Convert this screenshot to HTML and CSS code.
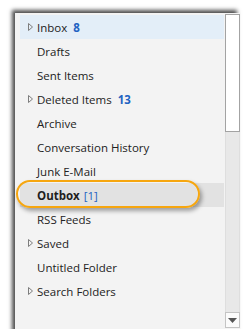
FILE: index.html
```html
<!DOCTYPE html>
<html>
<head>
<meta charset="utf-8">
<link rel="stylesheet" href="styles.css">
</head>
<body>
<div class="panel">
  <ul class="folders">
    <li class="row selected"><svg class="tw" width="7" height="10" viewBox="0 0 7 10"><path d="M1.5 1.5L5.5 5L1.5 8.5Z" fill="none" stroke="#7d7d7d" stroke-width="1"/></svg><span class="name">Inbox</span><span class="count">8</span></li>
    <li class="row"><span class="name">Drafts</span></li>
    <li class="row"><span class="name">Sent Items</span></li>
    <li class="row"><svg class="tw" width="7" height="10" viewBox="0 0 7 10"><path d="M1.5 1.5L5.5 5L1.5 8.5Z" fill="none" stroke="#7d7d7d" stroke-width="1"/></svg><span class="name">Deleted Items</span><span class="count">13</span></li>
    <li class="row"><span class="name">Archive</span></li>
    <li class="row"><span class="name">Conversation History</span></li>
    <li class="row"><span class="name">Junk E-Mail</span></li>
    <li class="row outbox"><span class="name bold">Outbox</span><span class="queued">[1]</span><span class="ring"></span></li>
    <li class="row"><span class="name">RSS Feeds</span></li>
    <li class="row"><svg class="tw" width="7" height="10" viewBox="0 0 7 10"><path d="M1.5 1.5L5.5 5L1.5 8.5Z" fill="none" stroke="#7d7d7d" stroke-width="1"/></svg><span class="name">Saved</span></li>
    <li class="row"><span class="name">Untitled Folder</span></li>
    <li class="row"><svg class="tw" width="7" height="10" viewBox="0 0 7 10"><path d="M1.5 1.5L5.5 5L1.5 8.5Z" fill="none" stroke="#7d7d7d" stroke-width="1"/></svg><span class="name">Search Folders</span></li>
  </ul>
  <div class="scrollbar">
    <div class="thumb"></div>
    <div class="track"></div>
    <div class="down"><svg width="9" height="5" viewBox="0 0 9 5"><path d="M0 0H9L4.5 5Z" fill="#555"/></svg></div>
  </div>
</div>
</body>
</html>
```
FILE: styles.css
```css
html, body {
  margin: 0;
  padding: 0;
  background: #ffffff;
  overflow: hidden;
}
body {
  width: 245px;
  height: 329px;
  padding: 13px 0 0 15px;
  box-sizing: border-box;
  font-family: "Open Sans", "Noto Sans", sans-serif;
}
.panel {
  width: 225px;
  height: 330px;
  background: #f3f3f3;
  display: flex;
  box-shadow: -3px -3px 4px rgba(0, 0, 0, 0.7);
}
.folders {
  list-style: none;
  margin: 0;
  padding: 2px 1px 0 5px;
  flex: 1;
}
.row {
  height: 24px;
  display: flex;
  align-items: center;
  padding-left: 17px;
  font-size: 11.5px;
  color: #222222;
  position: relative;
}
.row.selected {
  background: #e3eef8;
}
.row.outbox {
  background: #e2e2e2;
}
.tw {
  position: absolute;
  left: 7px;
  top: 7px;
}
.bold {
  font-weight: 700;
  color: #1e1e1e;
}
.count {
  margin-left: 6px;
  font-weight: 700;
  color: #1f63c2;
}
.queued {
  margin-left: 4px;
  color: #1f63c2;
}
.ring {
  position: absolute;
  left: -4px;
  top: -3px;
  width: 180px;
  height: 24px;
  border: 2.5px solid #f6a60f;
  border-radius: 15px;
  box-shadow: 2px 3px 4px rgba(0, 0, 0, 0.35);
}
.scrollbar {
  width: 15px;
  display: flex;
  flex-direction: column;
  padding-top: 1px;
  box-sizing: border-box;
  height: 315px;
}
.thumb {
  height: 118px;
  background: #ffffff;
  border: 1px solid #a3a3a3;
  box-sizing: border-box;
}
.track {
  flex: 1;
  background: #e8e8e8;
  border-left: 1px solid #dedede;
  border-right: 1px solid #dedede;
}
.down {
  height: 16px;
  background: #fbfbfb;
  border: 1px solid #c4c4c4;
  box-sizing: border-box;
  display: flex;
  align-items: center;
  justify-content: center;
}
```
